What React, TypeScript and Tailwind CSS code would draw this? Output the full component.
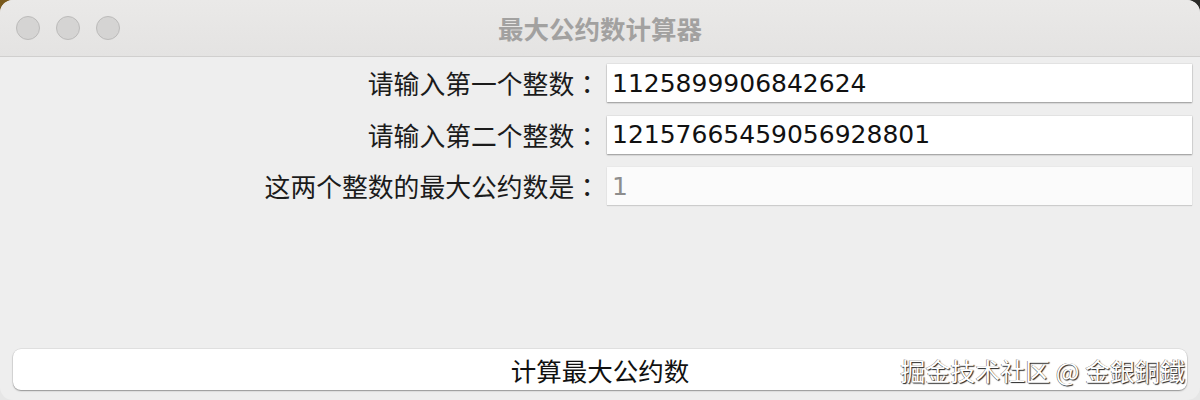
const cjk = "font-['Noto_Sans_CJK_SC',sans-serif]";

function Field({ value, muted }: { value: string; muted?: boolean }) {
  return (
    <div
      className={
        muted
          ? "h-[38px] flex items-center pl-[5px] bg-[#fbfbfb] shadow-[0_1px_1px_rgba(0,0,0,0.12),0_0_0_0.5px_rgba(0,0,0,0.04)] text-[#8d8d8d] font-['DejaVu_Sans',sans-serif] text-[25px] leading-none"
          : "h-[38px] flex items-center pl-[5px] bg-white shadow-[0_1px_1.5px_rgba(0,0,0,0.35),0_0_0_0.5px_rgba(0,0,0,0.08)] text-[#111] font-['DejaVu_Sans',sans-serif] text-[25px] leading-none"
      }
    >
      {value}
    </div>
  );
}

function Label({ text }: { text: string }) {
  return (
    <div className={`h-[38px] flex items-center justify-end text-[25.8px] leading-none text-[#1b1b1b] ${cjk}`}>
      {text}
      <span className="font-['Noto_Sans_CJK_TC',sans-serif]">：</span>
    </div>
  );
}

export default function App() {
  return (
    <div className="w-[1200px] h-[400px] overflow-hidden bg-[linear-gradient(to_bottom,transparent_24px,#e6e6e6_24px),linear-gradient(to_right,#7a5a1c,#3a3424_30%,#2a2a27)]">
      <div className="w-full h-full rounded-[13px] overflow-hidden flex flex-col bg-[#eeeeee]">
        {/* title bar */}
        <div className="relative h-[57px] shrink-0 flex items-center bg-[linear-gradient(to_bottom,#eae9e8,#e4e3e2)] border-b border-[#d0cfce]">
          <div className="flex gap-[16px] pl-[16px] -mt-[1px]">
            <span className="w-[24px] h-[24px] rounded-full bg-[#d5d4d3] border border-[#bcbbba]" />
            <span className="w-[24px] h-[24px] rounded-full bg-[#d5d4d3] border border-[#bcbbba]" />
            <span className="w-[24px] h-[24px] rounded-full bg-[#d5d4d3] border border-[#bcbbba]" />
          </div>
          <div className={`absolute inset-0 flex items-center justify-center pb-[1px] text-[25.5px] font-bold leading-none text-[#a2a1a0] ${cjk}`}>
            最大公约数计算器
          </div>
        </div>

        {/* body */}
        <div className="flex-1 flex flex-col">
          <div className="grid grid-cols-[600px_1fr] gap-x-[7px] gap-y-[13.5px] pt-[7px] pr-[8px]">
            <Label text="请输入第一个整数" />
            <Field value="1125899906842624" />
            <Label text="请输入第二个整数" />
            <Field value="12157665459056928801" />
            <Label text="这两个整数的最大公约数是" />
            <Field value="1" muted />
          </div>

          <div className="flex-1" />

          <div className="relative mx-[13px] mb-[10px]">
            <div className={`h-[41px] rounded-[8px] bg-white shadow-[0_1px_1.5px_rgba(0,0,0,0.35),0_0_0_0.5px_rgba(0,0,0,0.1)] flex items-center justify-center text-[25.5px] leading-none text-[#111] ${cjk}`}>
              计算最大公约数
            </div>
            <div className={`absolute right-[2px] top-[9px] text-[25px] leading-none text-white [text-shadow:1px_1px_1px_#222,-0.5px_-0.5px_0.5px_#666] ${cjk}`}>
              掘金技术社区 @ 金銀銅鐵
            </div>
          </div>
        </div>
      </div>
    </div>
  );
}
